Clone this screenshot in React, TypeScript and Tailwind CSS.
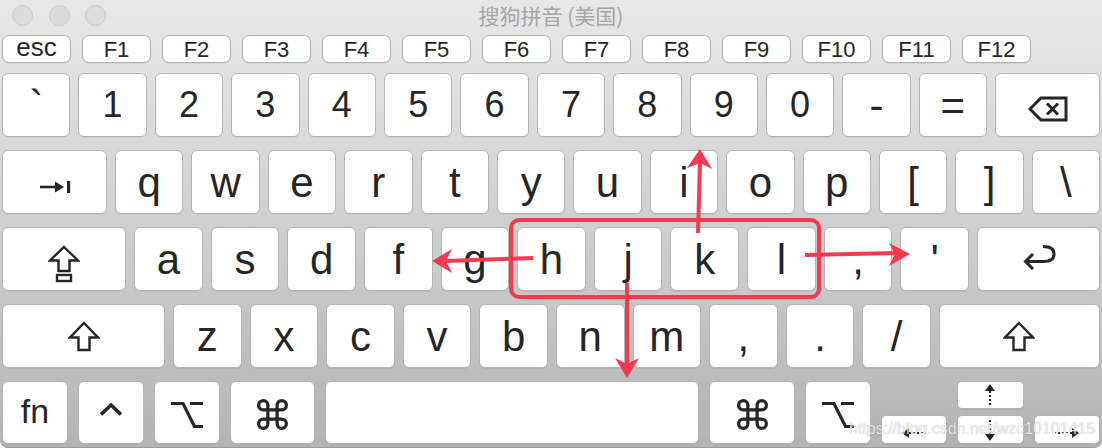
import React from 'react';
import { Command } from 'lucide-react';
import { clsx, type ClassValue } from 'clsx';
import { twMerge } from 'tailwind-merge';

function cn(...inputs: ClassValue[]) {
  return twMerge(clsx(inputs));
}

const ink = '#262626';

function Key({ children, className }: { children?: React.ReactNode; className?: string }) {
  return (
    <div
      className={cn(
        'flex items-center justify-center bg-white border-[1.5px] border-[#b4b4b4] rounded-[6px] text-[#262626] leading-none shadow-[0_1px_0_rgba(0,0,0,0.05)]',
        className
      )}
    >
      {children}
    </div>
  );
}

function Char({ c }: { c: string }) {
  const digit = /[0-9]/.test(c);
  return <Key className={cn('flex-1', digit ? 'text-[36px]' : 'text-[42px]')}>{c}</Key>;
}

// icons drawn in svg
const TabIcon = () => (
  <svg width="32" height="14" viewBox="0 0 32 14" className="mt-[9px]">
    <path d="M1 7 H20" stroke={ink} strokeWidth="2.6" />
    <polygon points="16,1.5 25,7 16,12.5" fill={ink} />
    <rect x="28" y="1" width="3.2" height="12" fill={ink} />
  </svg>
);

const CapsIcon = () => (
  <svg width="32" height="38" viewBox="0 0 32 38" className="mt-[10px]" fill="none">
    <path d="M16 2 L30 15.5 L21.5 15.5 L21.5 26 L10.5 26 L10.5 15.5 L2 15.5 Z" stroke={ink} strokeWidth="2.4" strokeLinejoin="miter" />
    <rect x="9" y="30" width="14" height="6" stroke={ink} strokeWidth="2.4" />
  </svg>
);

const ShiftIcon = () => (
  <svg width="32" height="31" viewBox="0 0 32 31" fill="none">
    <path d="M16 2 L30 16.5 L21.5 16.5 L21.5 29 L10.5 29 L10.5 16.5 L2 16.5 Z" stroke={ink} strokeWidth="2.4" strokeLinejoin="miter" />
  </svg>
);

const ReturnIcon = () => (
  <svg width="36" height="26" viewBox="0 0 36 26" fill="none" className="mt-[-4px]">
    <path d="M22 2.5 Q33 2.5 33 10 Q33 17.5 22 17.5 L5 17.5" stroke={ink} strokeWidth="3" />
    <path d="M12 10 L4.5 17.5 L12 25" stroke={ink} strokeWidth="3" />
  </svg>
);

const BackspaceIcon = () => (
  <svg width="40" height="26" viewBox="0 0 40 26" fill="none" className="mt-[8px]">
    <path d="M2 13 L13 2 L38 2 L38 24 L13 24 Z" stroke={ink} strokeWidth="3" strokeLinejoin="miter" />
    <path d="M19 7.5 L30 18.5 M30 7.5 L19 18.5" stroke={ink} strokeWidth="3" />
  </svg>
);

const CaretIcon = () => (
  <svg width="24" height="13" viewBox="0 0 24 13" fill="none" className="mt-[-6px]">
    <polyline points="2,11.5 12,2 22,11.5" stroke={ink} strokeWidth="3.6" />
  </svg>
);

const OptionIcon = () => (
  <svg width="34" height="28" viewBox="0 0 34 28" fill="none" className="mt-[4px]">
    <path d="M1 2.5 H13 L24.5 25.5 H33 M20 2.5 H33" stroke={ink} strokeWidth="3.2" />
  </svg>
);

const CmdIcon = () => <Command size={37} strokeWidth={2.1} color={ink} className="mt-[3px]" />;

const ArrowV = ({ down }: { down?: boolean }) => (
  <svg width="10" height="22" viewBox="0 0 10 22" className={down ? 'rotate-180' : ''}>
    <polygon points="5,0 0,7 10,7" fill={ink} />
    <line x1="5" y1="7" x2="5" y2="22" stroke={ink} strokeWidth="2.2" strokeDasharray="2 2" />
  </svg>
);

const ArrowH = ({ right }: { right?: boolean }) => (
  <svg width="24" height="10" viewBox="0 0 24 10" className={cn('mt-[6px]', right ? 'rotate-180' : '')}>
    <polygon points="0,5 7,0 7,10" fill={ink} />
    <line x1="7" y1="5" x2="24" y2="5" stroke={ink} strokeWidth="2.2" strokeDasharray="2 2" />
  </svg>
);

const fkeys = ['esc', 'F1', 'F2', 'F3', 'F4', 'F5', 'F6', 'F7', 'F8', 'F9', 'F10', 'F11', 'F12'];
const row1 = ['`', '1', '2', '3', '4', '5', '6', '7', '8', '9', '0', '-', '='];
const row2 = ['q', 'w', 'e', 'r', 't', 'y', 'u', 'i', 'o', 'p', '[', ']', '\\'];
const row3 = ['a', 's', 'd', 'f', 'g', 'h', 'j', 'k', 'l', ',', "'"];
const row4 = ['z', 'x', 'c', 'v', 'b', 'n', 'm', ',', '.', '/'];

const red = '#f33a4e';

function Annotations() {
  return (
    <svg
      className="absolute inset-0 pointer-events-none"
      width="1102"
      height="448"
      viewBox="0 0 1102 448"
      fill="none"
    >
      <rect x="511" y="220" width="308" height="77" rx="8" stroke={red} strokeWidth="4" />
      {/* up */}
      <path d="M698 233 L700 162" stroke={red} strokeWidth="4" />
      <polygon points="700,149 712,169 700,163 687,168" fill={red} />
      {/* left */}
      <path d="M533 258 L446 261" stroke={red} strokeWidth="4" />
      <polygon points="432,261 452,249 446,261 452,273" fill={red} />
      {/* down */}
      <path d="M627 283 L627 364" stroke={red} strokeWidth="4" />
      <polygon points="627,378 615,358 627,364 639,358" fill={red} />
      {/* right */}
      <path d="M805 255 L896 253" stroke={red} strokeWidth="4" />
      <polygon points="910,254 889,243 895,254 889,266" fill={red} />
    </svg>
  );
}

export default function App() {
  return (
    <div className="w-[1102px] h-[448px] bg-white">
      <div className="relative w-[1102px] h-[448px] overflow-hidden rounded-b-[8px] border-b border-[#9c9c9c] px-[2px] font-['Liberation_Sans',Arial,sans-serif] bg-[linear-gradient(to_bottom,#e8e8e8_0%,#e2e2e2_15%,#d8d8d8_33%,#cbcbcb_60%,#b3b3b3_100%)]">
        {/* title bar */}
        <div className="grid grid-cols-[1fr_auto_1fr] h-[35px]">
          <div className="flex items-start gap-[15.5px] pl-[10px] pt-[5px]">
            <div className="w-[21px] h-[21px] rounded-full bg-[#dcdcdc] border border-[#cbcbcb]" />
            <div className="w-[21px] h-[21px] rounded-full bg-[#dcdcdc] border border-[#cbcbcb]" />
            <div className="w-[21px] h-[21px] rounded-full bg-[#dcdcdc] border border-[#cbcbcb]" />
          </div>
          <div className="pt-[5px] text-[21px] leading-none text-[#a6a6a6] font-['Noto_Sans_CJK_SC',sans-serif]">
            搜狗拼音 (美国)
          </div>
          <div />
        </div>

        {/* function row */}
        <div className="flex gap-[11px] h-[28px]">
          {fkeys.map((k) => (
            <Key
              key={k}
              className={cn(
                'w-[69px] rounded-[7px] border-[1.5px] border-[#b0b0b0]',
                k === 'esc' ? 'text-[26px] pb-[4px]' : 'text-[22px]'
              )}
            >
              {k}
            </Key>
          ))}
        </div>

        <div className="flex flex-col gap-[13px] mt-[10px]">
          {/* number row */}
          <div className="flex gap-[8px] h-[64px]">
            {row1.map((c) => (
              <Char key={c} c={c} />
            ))}
            <Key className="w-[105px]">
              <BackspaceIcon />
            </Key>
          </div>

          {/* qwerty row */}
          <div className="flex gap-[8px] h-[64px]">
            <Key className="w-[105px]">
              <TabIcon />
            </Key>
            {row2.map((c) => (
              <Char key={c} c={c} />
            ))}
          </div>

          {/* home row */}
          <div className="flex gap-[8px] h-[64px]">
            <Key className="w-[124px]">
              <CapsIcon />
            </Key>
            {row3.map((c, i) => (
              <Char key={c + i} c={c} />
            ))}
            <Key className="w-[123px]">
              <ReturnIcon />
            </Key>
          </div>

          {/* shift row */}
          <div className="flex gap-[8px] h-[64px]">
            <Key className="w-[163px]">
              <ShiftIcon />
            </Key>
            {row4.map((c, i) => (
              <Char key={c + i} c={c} />
            ))}
            <Key className="w-[161px]">
              <ShiftIcon />
            </Key>
          </div>

          {/* bottom row */}
          <div className="flex gap-[10px] h-[63px]">
            <Key className="w-[66px] text-[34px] pb-[2px]">fn</Key>
            <Key className="w-[66px]">
              <CaretIcon />
            </Key>
            <Key className="w-[66px]">
              <OptionIcon />
            </Key>
            <Key className="w-[85px]">
              <CmdIcon />
            </Key>
            <Key className="flex-1" />
            <Key className="w-[86px]">
              <CmdIcon />
            </Key>
            <Key className="w-[66px]">
              <OptionIcon />
            </Key>
            <div className="w-[219px] grid grid-cols-3 grid-rows-[28px_29px] gap-x-[10px] gap-y-[6px]">
              <Key className="col-start-2 row-start-1 rounded-[5px]">
                <ArrowV />
              </Key>
              <Key className="col-start-1 row-start-2 rounded-[5px]">
                <ArrowH />
              </Key>
              <Key className="col-start-2 row-start-2 rounded-[5px]">
                <ArrowV down />
              </Key>
              <Key className="col-start-3 row-start-2 rounded-[5px]">
                <ArrowH right />
              </Key>
            </div>
          </div>
        </div>

        <Annotations />

        <div className="absolute left-[849px] top-[421px] text-[16px] leading-none text-[rgba(255,255,255,0.82)] [text-shadow:0_0_1px_rgba(0,0,0,0.35)] pointer-events-none">
          https://blog.csdn.net/wzc10101415
        </div>
      </div>
    </div>
  );
}
